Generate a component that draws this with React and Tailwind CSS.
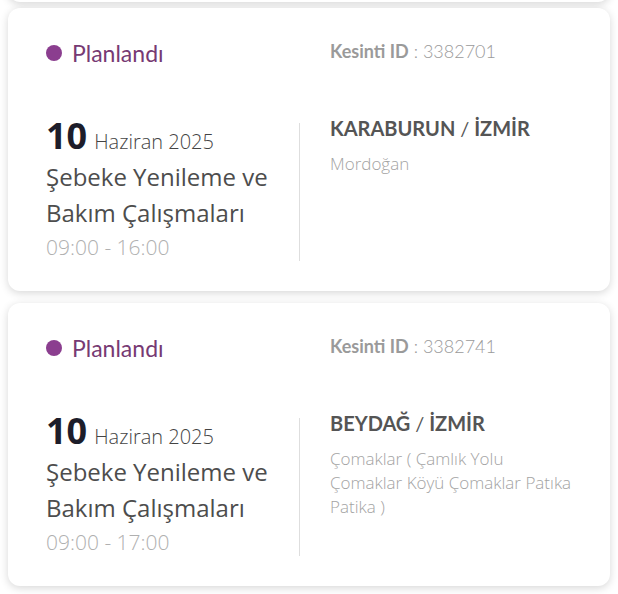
const outages = [
  {
    id: '3382701',
    day: '10',
    month: 'Haziran 2025',
    title: 'Şebeke Yenileme ve Bakım Çalışmaları',
    time: '09:00 - 16:00',
    place: 'KARABURUN',
    city: 'İZMİR',
    area: 'Mordoğan',
  },
  {
    id: '3382741',
    day: '10',
    month: 'Haziran 2025',
    title: 'Şebeke Yenileme ve Bakım Çalışmaları',
    time: '09:00 - 17:00',
    place: 'BEYDAĞ',
    city: 'İZMİR',
    area: 'Çomaklar ( Çamlık Yolu Çomaklar Köyü Çomaklar Patıka Patika )',
  },
]

function OutageCard({ item }) {
  return (
    <article className="rounded-xl bg-white pb-[29px] pl-[38px] pr-6 pt-[31px] shadow-[0_2px_8px_rgba(0,0,0,0.16)]">
      <div className="flex items-center">
        <div className="flex w-[284px] items-center gap-[10px]">
          <span className="h-4 w-4 rounded-full bg-[#8b3e8f]" />
          <span className="font-['Lato',sans-serif] text-[23px] leading-7 text-[#773a73]">Planlandı</span>
        </div>
        <p className="-mt-1 font-['Lato',sans-serif] text-[18px] leading-7 text-[#9a9a9a]">
          <span className="font-bold">Kesinti ID</span>
          <span className="font-light"> : {item.id}</span>
        </p>
      </div>

      <div className="mt-[50px] flex items-start">
        <div className="w-[253px] font-['Open_Sans',sans-serif]">
          <p className="flex items-baseline gap-[7px] leading-[38px]">
            <span className="text-[36px] font-bold text-[#1d1d2a]">{item.day}</span>
            <span className="text-[20px] font-light text-[#444]">{item.month}</span>
          </p>
          <p className="-mt-[2px] text-[24px] leading-9 text-[#4d4d4d]">{item.title}</p>
          <p className="mt-[1px] text-[21px] font-light leading-[30px] text-[#b0b0b0]">{item.time}</p>
        </div>
        <div className="mt-[6px] h-[138px] flex-1 border-l border-[#dedede] pl-[30px]">
          <p className="-mt-[9px] font-['Lato',sans-serif] text-[20px] font-bold leading-7 text-[#555]">
            {item.place} <span className="font-normal">/</span> {item.city}
          </p>
          <p className="mt-[10px] w-[244px] font-['Open_Sans',sans-serif] text-[17px] font-light leading-6 text-[#a3a3a3]">
            {item.area}
          </p>
        </div>
      </div>
    </article>
  )
}

export default function App() {
  return (
    <div className="min-h-screen overflow-hidden bg-white px-2">
      <div className="flex flex-col gap-[12px]">
        <div className="-mb-[6px] -mt-[290px] h-[292px] rounded-xl bg-white shadow-[0_2px_8px_rgba(0,0,0,0.16)]" />
        {outages.map((item) => (
          <OutageCard item={item} key={item.id} />
        ))}
      </div>
    </div>
  )
}
